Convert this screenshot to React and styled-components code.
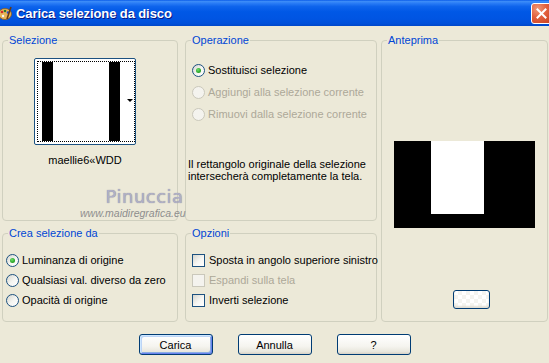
import React from 'react';
import styled, { createGlobalStyle } from 'styled-components';

const GlobalStyle = createGlobalStyle`
  html, body {
    margin: 0;
    padding: 0;
    background: #ECE9D8;
  }
  body {
    font-family: "Liberation Sans", Arial, sans-serif;
    font-size: 11px;
    color: #000;
  }
`;

const Window = styled.div`
  position: relative;
  width: 549px;
  height: 363px;
  overflow: hidden;
  background: #ECE9D8;
  display: flex;
  flex-direction: column;
`;

const TitleBar = styled.div`
  height: 26px;
  flex: none;
  display: flex;
  align-items: center;
  background: linear-gradient(
    to bottom,
    #0A5CE9 0%,
    #3D8DF8 6%,
    #2A7DF6 12%,
    #0E64EC 25%,
    #0058E6 45%,
    #0055E3 70%,
    #0050DA 90%,
    #0047C9 100%
  );
`;

const AppIcon = styled.svg`
  flex: none;
  margin-left: -2px;
  margin-right: 4px;
`;

const TitleText = styled.div`
  color: #fff;
  font-weight: bold;
  font-size: 13px;
  letter-spacing: -0.1px;
  text-shadow: 1px 1px #0A1883;
`;

const CloseButton = styled.div`
  margin-left: auto;
  margin-right: -3px;
  width: 21px;
  height: 21px;
  box-sizing: border-box;
  border: 1px solid #fff;
  border-radius: 3px;
  background: radial-gradient(circle at 30% 25%, #F09878 0%, #E2603E 45%, #C8401F 100%);
  display: flex;
  align-items: center;
  justify-content: center;
`;

const Content = styled.div`
  display: grid;
  grid-template-columns: 176px 7px 192px 4px 167px;
  grid-template-rows: 187px 95px;
  row-gap: 6px;
  padding: 8px 0 0 2px;
`;

const Group = styled.fieldset`
  grid-column: ${p => p.$col};
  grid-row: ${p => p.$row};
  position: relative;
  margin: 0;
  padding: 0;
  min-width: 0;
  border: 1px solid #D0D0BF;
  border-radius: 4px;
`;

const Legend = styled.legend`
  color: #0046D5;
  font-size: 11px;
  line-height: 13px;
  padding: 0 1px;
  margin-left: 5px;
`;

const SelBody = styled.div`
  display: flex;
  flex-direction: column;
  align-items: center;
  padding: 11px 10px 0 0;
`;

const Thumb = styled.div`
  width: 102px;
  height: 87px;
  box-sizing: border-box;
  border: 1px solid #1C5180;
  border-radius: 2px;
  background: #fff;
  padding: 2px;
  display: flex;
`;

const FocusRect = styled.div`
  flex: 1;
  position: relative;
  border: 1px dotted #000;
  display: flex;
`;

const DropArrow = styled.span`
  position: absolute;
  right: 1px;
  top: 37px;
  width: 0;
  height: 0;
  border-left: 3px solid transparent;
  border-right: 3px solid transparent;
  border-top: 3px solid #000;
`;

const Caption = styled.div`
  margin-top: 9px;
  line-height: 13px;
`;

const Watermark = styled.div`
  position: absolute;
  left: 80px;
  top: 187px;
  display: flex;
  flex-direction: column;
  align-items: flex-end;
  pointer-events: none;
`;

const WatermarkName = styled.div`
  font-family: "DejaVu Sans", "Liberation Sans", sans-serif;
  font-size: 18px;
  line-height: 20px;
  letter-spacing: 0.5px;
  color: #B0B0C6;
  text-shadow: 0 0 1px #7E7E92;
  margin-right: 2px;
`;

const WatermarkUrl = styled.div`
  font-style: italic;
  font-size: 10.5px;
  line-height: 12px;
  color: #8E8E8E;
  margin-top: 0;
`;

const OptionList = styled.div`
  display: flex;
  flex-direction: column;
  padding: ${p => p.$pad};
`;

const OptionRow = styled.label`
  display: flex;
  align-items: center;
  gap: ${p => p.$gap || 3}px;
  height: ${p => p.$h}px;
  color: ${p => (p.$disabled ? '#ACA899' : '#000')};
  white-space: nowrap;
`;

const RadioMark = styled.span`
  flex: none;
  width: 13px;
  height: 13px;
  box-sizing: border-box;
  border-radius: 50%;
  border: 1px solid ${p => (p.$disabled ? '#CAC8BB' : '#1C5180')};
  background: ${p => (p.$disabled ? '#F4F3EE' : 'linear-gradient(135deg, #D6D6CE 0%, #F6F6F3 55%, #FFFFFF 100%)')};
  display: flex;
  align-items: center;
  justify-content: center;
  &::after {
    content: '';
    display: ${p => (p.$checked ? 'block' : 'none')};
    width: 5px;
    height: 5px;
    border-radius: 50%;
    background: radial-gradient(circle at 40% 35%, #6FE06A 0%, #2BA62A 60%, #1B881B 100%);
  }
`;

const CheckMark = styled.span`
  flex: none;
  width: 13px;
  height: 13px;
  box-sizing: border-box;
  border: 1px solid ${p => (p.$disabled ? '#CAC8BB' : '#1C5180')};
  background: ${p => (p.$disabled ? '#F4F3EE' : 'linear-gradient(135deg, #D6D6CE 0%, #F6F6F3 55%, #FFFFFF 100%)')};
`;

const Note = styled.div`
  margin-top: 33px;
  padding-left: 2px;
  line-height: 12px;
`;

const PreviewBody = styled.div`
  display: flex;
  flex-direction: column;
  align-items: center;
  padding-top: 94px;
`;

const PreviewButton = styled.div`
  align-self: flex-start;
  margin: 62px 0 0 71px;
  width: 37px;
  height: 19px;
  box-sizing: border-box;
  border: 1px solid #003C74;
  border-radius: 3px;
  background:
    repeating-conic-gradient(#F4F4F0 0 25%, #FFFFFF 0 50%) 0 0 / 8px 8px;
  box-shadow: inset 0 -2px 2px #E0DDD2;
`;

const ButtonRow = styled.div`
  display: flex;
  justify-content: center;
  gap: 25px;
  margin-top: 12px;
`;

const Button = styled.button`
  width: 74px;
  height: 21px;
  box-sizing: border-box;
  padding: 0;
  font-family: "Liberation Sans", Arial, sans-serif;
  font-size: 11px;
  color: #000;
  border: 1px solid #003C74;
  border-radius: 3px;
  background: linear-gradient(to bottom, #FFFFFF 0%, #F5F4EF 60%, #E8E6DC 88%, #D6D0C5 100%);
  box-shadow: ${p => (p.$default ? 'inset 1px 1px #CEE7FF, inset -1px -1px #6982EE, inset 2px 2px #BCD4F6, inset -2px -2px #89ADE4' : 'none')};
`;

const Radio = ({ checked, disabled, children, h, gap }) => (
  <OptionRow $disabled={disabled} $h={h} $gap={gap}>
    <RadioMark $checked={checked} $disabled={disabled} />
    {children}
  </OptionRow>
);

const Check = ({ disabled, children, h, gap }) => (
  <OptionRow $disabled={disabled} $h={h} $gap={gap}>
    <CheckMark $disabled={disabled} />
    {children}
  </OptionRow>
);

export default function App() {
  return (
    <>
      <GlobalStyle />
      <Window>
        <TitleBar>
          <AppIcon width="14" height="16" viewBox="0 0 14 16">
            <ellipse cx="7" cy="9" rx="6.5" ry="5.5" fill="#E8B45A" stroke="#8A5A1C" strokeWidth="0.8" />
            <circle cx="4" cy="7" r="1.3" fill="#D42A2A" />
            <circle cx="7" cy="6" r="1.3" fill="#2A7A2A" />
            <circle cx="10" cy="7.5" r="1.3" fill="#2A4AD4" />
            <circle cx="5" cy="11" r="1.2" fill="#F5F5F5" />
            <path d="M9 14 L13 2" stroke="#6A3A10" strokeWidth="1.6" />
          </AppIcon>
          <TitleText>Carica selezione da disco</TitleText>
          <CloseButton>
            <svg width="11" height="11" viewBox="0 0 11 11">
              <path d="M1.5 1.5 L9.5 9.5 M9.5 1.5 L1.5 9.5" stroke="#fff" strokeWidth="2" strokeLinecap="square" />
            </svg>
          </CloseButton>
        </TitleBar>

        <Content>
          <Group $col="1" $row="1">
            <Legend>Selezione</Legend>
            <SelBody>
              <Thumb>
                <FocusRect>
                  <svg width="96" height="79" viewBox="0 0 96 79">
                    <rect x="0" y="0" width="96" height="79" fill="#fff" />
                    <rect x="4" y="0" width="11" height="79" fill="#000" />
                    <rect x="71" y="0" width="11" height="79" fill="#000" />
                  </svg>
                  <DropArrow />
                </FocusRect>
              </Thumb>
              <Caption>maellie6«WDD</Caption>
            </SelBody>
          </Group>

          <Group $col="3" $row="1">
            <Legend>Operazione</Legend>
            <OptionList $pad="12px 0 0 6px">
              <Radio h={22} checked>Sostituisci selezione</Radio>
              <Radio h={22} disabled>Aggiungi alla selezione corrente</Radio>
              <Radio h={22} disabled>Rimuovi dalla selezione corrente</Radio>
            </OptionList>
            <Note>
              Il rettangolo originale della selezione
              <br />
              intersecherà completamente la tela.
            </Note>
          </Group>

          <Group $col="5" $row="1 / span 2">
            <Legend>Anteprima</Legend>
            <PreviewBody>
              <svg width="141" height="87" viewBox="0 0 141 87">
                <rect x="0" y="0" width="141" height="87" fill="#000" />
                <rect x="37" y="0" width="53" height="73" fill="#fff" />
              </svg>
              <PreviewButton />
            </PreviewBody>
          </Group>

          <Group $col="1" $row="2">
            <Legend>Crea selezione da</Legend>
            <OptionList $pad="10px 0 0 3px">
              <Radio h={20} checked>Luminanza di origine</Radio>
              <Radio h={20}>Qualsiasi val. diverso da zero</Radio>
              <Radio h={20}>Opacità di origine</Radio>
            </OptionList>
          </Group>

          <Group $col="3" $row="2">
            <Legend>Opzioni</Legend>
            <OptionList $pad="10px 0 0 6px">
              <Check h={20} gap={4}>Sposta in angolo superiore sinistro</Check>
              <Check h={20} gap={4} disabled>Espandi sulla tela</Check>
              <Check h={20} gap={4}>Inverti selezione</Check>
            </OptionList>
          </Group>
        </Content>

        <ButtonRow>
          <Button $default>Carica</Button>
          <Button>Annulla</Button>
          <Button>?</Button>
        </ButtonRow>

        <Watermark>
          <WatermarkName>Pinuccia</WatermarkName>
          <WatermarkUrl>www.maidiregrafica.eu</WatermarkUrl>
        </Watermark>
      </Window>
    </>
  );
}
